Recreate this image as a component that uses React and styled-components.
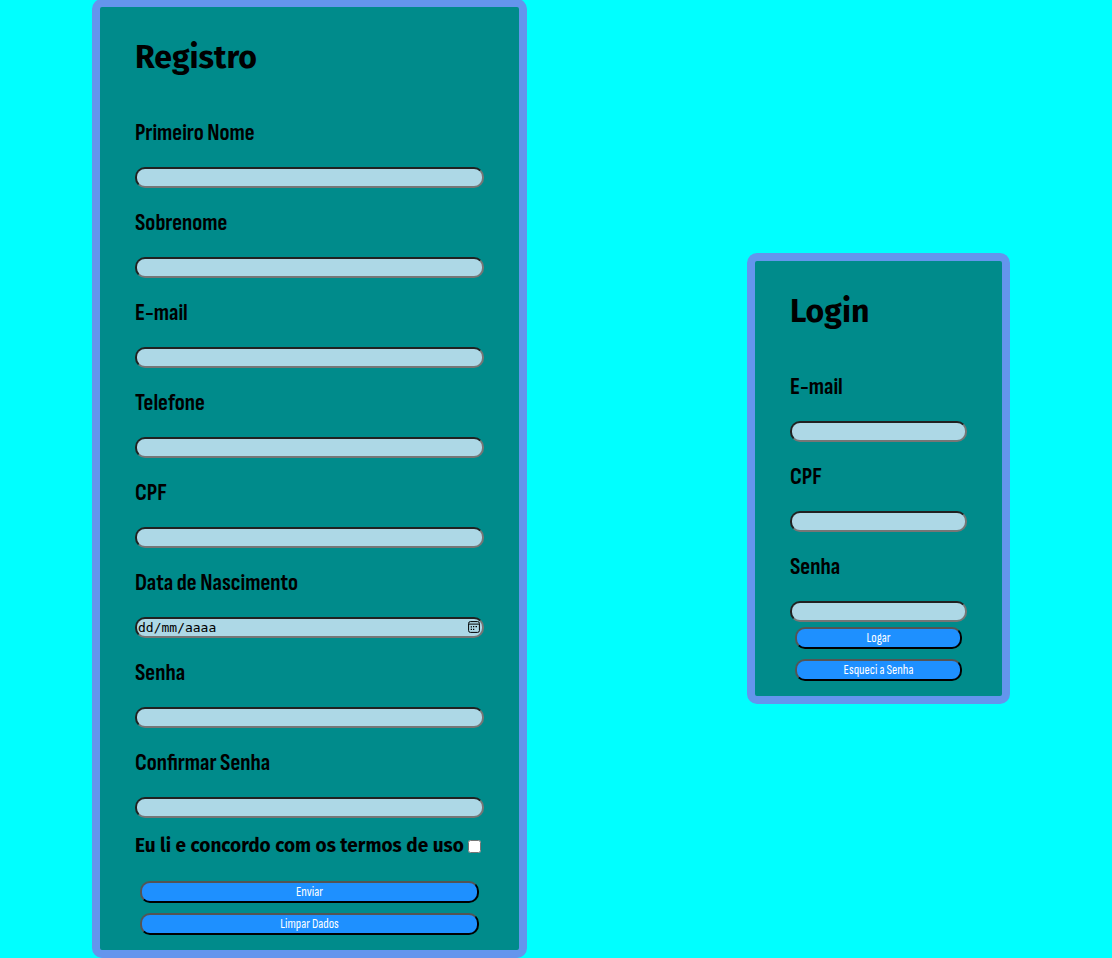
import React from "react";
import styled, { createGlobalStyle } from "styled-components";

const condensed = `"Sofia Sans Condensed", "Roboto Condensed", "Liberation Sans Narrow", sans-serif`;

const GlobalStyle = createGlobalStyle`
  *, *::before, *::after { box-sizing: border-box; }
  body {
    margin: 0;
    background: aqua;
    color: black;
    font-family: "Fira Sans", "Open Sans", sans-serif;
  }
`;

const Page = styled.main`
  display: flex;
  justify-content: space-between;
  align-items: center;
  min-height: 100vh;
  padding: 0 102px 1px 92px;
`;

const Card = styled.form`
  flex: 0 1 ${(p) => p.$basis}px;
  margin: ${(p) => (p.$flush ? "-1px 0" : "0")};
  padding: 30px 35px 10px;
  background: darkcyan;
  border: 8px solid cornflowerblue;
  border-radius: 10px;
`;

const Title = styled.h1`
  margin: 0 0 40px;
  font-size: 32px;
  line-height: 40px;
  font-weight: 700;
`;

const Fields = styled.div`
  display: grid;
  gap: 19px;
`;

const FieldBox = styled.div`
  display: grid;
  gap: 18px;
`;

const Label = styled.label`
  font-family: ${condensed};
  font-size: 23px;
  line-height: 32px;
  font-weight: 700;
`;

const InputWrap = styled.div`
  position: relative;
  display: flex;
`;

const Input = styled.input`
  width: 100%;
  height: 21px;
  padding: 1px;
  background: lightblue;
  color: black;
  border: 2px inset rgb(118, 118, 118);
  border-radius: 10px;
  font-family: "DejaVu Sans Mono", monospace;
  font-size: 13px;

  &::placeholder { color: black; opacity: 1; }
`;

const PickerButton = styled.button`
  position: absolute;
  top: 4px;
  right: 4px;
  display: flex;
  padding: 0;
  border: 0;
  background: none;
  color: black;
`;

const Terms = styled.label`
  display: flex;
  align-items: center;
  justify-content: space-between;
  margin: 16px 3px 18px 0;
  font-size: 19px;
  line-height: 24px;
  font-weight: 700;
  white-space: nowrap;
`;

const Checkbox = styled.input`
  width: 13px;
  height: 13px;
  margin: 0;
`;

const Actions = styled.div`
  display: grid;
  gap: 10px;
  padding: 5px;
`;

const Button = styled.button`
  height: 22px;
  padding: 0 6px;
  background: dodgerblue;
  color: white;
  border: 2px outset black;
  border-radius: 10px;
  font-family: ${condensed};
  font-size: 13px;
  line-height: 18px;
`;

function CalendarIcon() {
  return (
    <svg width="12" height="12" viewBox="0 0 12 12" fill="none" aria-hidden="true">
      <rect x="0.6" y="0.6" width="10.8" height="10.8" rx="1.8" stroke="currentColor" strokeWidth="1" />
      <path d="M1 3.1h10" stroke="currentColor" strokeWidth="1" />
      <path
        d="M5 5h1.3v1.3H5zM7.5 5h1.5v1.3H7.5zM2.7 5.3h1.3v1.1H2.7zM2.7 7.8h1.3v1.3H2.7zM5 7.8h1.3v1.3H5z"
        fill="currentColor"
      />
    </svg>
  );
}

function Field({ id, label, type = "text", placeholder, picker }) {
  return (
    <FieldBox>
      <Label htmlFor={id}>{label}</Label>
      <InputWrap>
        <Input id={id} type={type} placeholder={placeholder} />
        {picker && (
          <PickerButton type="button" aria-label="Abrir calendário">
            <CalendarIcon />
          </PickerButton>
        )}
      </InputWrap>
    </FieldBox>
  );
}

export default function App() {
  return (
    <>
      <GlobalStyle />
      <Page>
        <Card $basis={435} $flush onSubmit={(e) => e.preventDefault()}>
          <Title>Registro</Title>
          <Fields>
            <Field id="nome" label="Primeiro Nome" />
            <Field id="sobrenome" label="Sobrenome" />
            <Field id="email" label="E-mail" type="email" />
            <Field id="telefone" label="Telefone" type="tel" />
            <Field id="cpf" label="CPF" />
            <Field id="nascimento" label="Data de Nascimento" placeholder="dd/mm/aaaa" picker />
            <Field id="senha" label="Senha" type="password" />
            <Field id="confirmar" label="Confirmar Senha" type="password" />
          </Fields>
          <Terms>
            Eu li e concordo com os termos de uso
            <Checkbox type="checkbox" />
          </Terms>
          <Actions>
            <Button type="submit">Enviar</Button>
            <Button type="reset">Limpar Dados</Button>
          </Actions>
        </Card>
        <Card $basis={263} onSubmit={(e) => e.preventDefault()}>
          <Title>Login</Title>
          <Fields>
            <Field id="login-email" label="E-mail" type="email" />
            <Field id="login-cpf" label="CPF" />
            <Field id="login-senha" label="Senha" type="password" />
          </Fields>
          <Actions>
            <Button type="submit">Logar</Button>
            <Button type="button">Esqueci a Senha</Button>
          </Actions>
        </Card>
      </Page>
    </>
  );
}
